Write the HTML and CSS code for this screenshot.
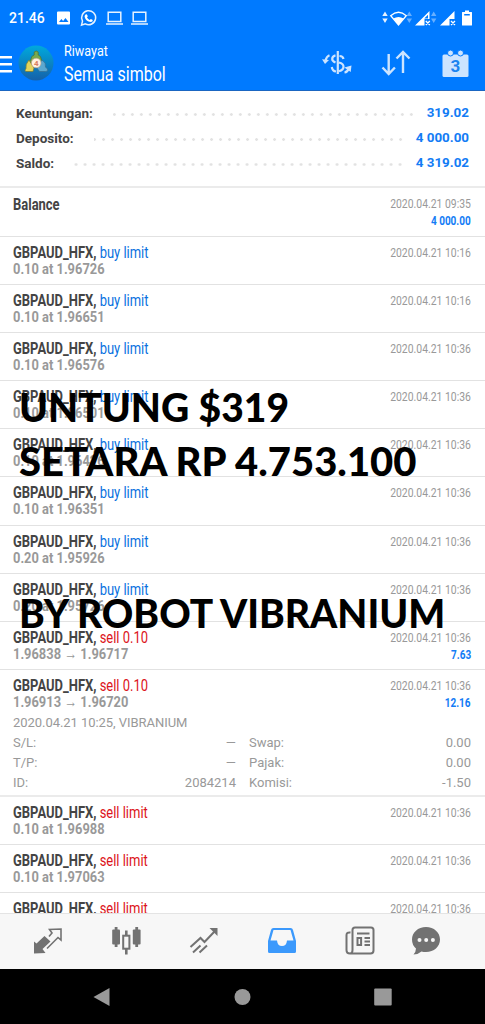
FILE: index.html
```
<!DOCTYPE html>
<html lang="id">
<head>
<meta charset="utf-8">
<title>Riwayat</title>
<link rel="stylesheet" href="styles.css">
</head>
<body>
<div class="screen">
  <header>
    <div class="status">
      <span class="clock">21.46</span>
      <svg class="status-left" width="96" height="18" viewBox="0 0 96 18" fill="none" stroke="#e6f2ff">
        <path fill="#fff" stroke="none" fill-rule="evenodd" d="M2 2.500h11q1 0 1 1v11q0 1-1 1h-11q-1 0-1-1v-11q0-1 1-1zM3 13h9.500l-3-4-2.400 2.900-1.700-2z"/>
        <path stroke-width="1.500" d="M25.500 16.200l1-4.100a7 7 0 1 1 2.800 2.800z"/>
        <path fill="#fff" stroke="none" d="M29.500 5.500l1.300-.3 1 2-.8 1.200q1 1.700 2.700 2.500l1.200-1 1.900 1q0 2-2 2.200-5-.6-6.200-5.400 0-1.500.9-2.200z"/>
        <path stroke-width="1.500" d="M52.200 3.200h12.600v9.300H52.200zM50 15h17M77.200 3.200h12.600v9.300H77.200zM75 15h17"/>
      </svg>
      <svg class="status-right" width="92" height="18" viewBox="0 0 92 18" fill="#fff">
        <path d="M.3 7L3 2.500 5.700 7zM.3 9.500h5.400L3 14z" opacity=".9"/>
        <path fill="none" stroke="#fff" stroke-width="1.400" d="M8.700 6.700Q16.500 0 24.300 6.700L16.500 16z"/><path d="M11.300 9.500q5.200-3 10.400 0L16.500 16z"/>
        <path d="M24.600 7l2.700-4.500L30 7zM24.600 9.500H30L27.300 14zM49 7l2.700-4.500L54.400 7zM49 9.500h5.400L51.700 14z" opacity=".4"/>
        <path fill-rule="evenodd" d="M33 16.500L47.500 2v8h-5v6.500zM42.500 9.500h3.500V5.700l-3.500 3.500zM58 16.500L72.500 2v8h-5v6.500z"/>
        <path fill="none" stroke="#fff" stroke-width="1.300" d="M43.800 12l4 4m0-4l-4 4M69 12l4 4m0-4l-4 4"/>
        <path fill-rule="evenodd" d="M80.500 3H83V1.500h4V3h2.500q.5 0 .5.500v12.500q0 .5-.5.500h-9q-.5 0-.5-.5V3.500q0-.5.500-.5zm1.700 2v1.500h5.600V5z"/>
      </svg>
    </div>
    <div class="toolbar">
      <svg class="burger" width="13" height="36" viewBox="0 0 13 36"><path stroke="#fff" stroke-width="2.600" d="M0 12.300h12M0 19.300h12M0 26.300h12"/></svg>
      <svg class="logo" width="36" height="36" viewBox="0 0 36 36">
        <defs><linearGradient id="disc" x1="0" y1="0" x2="0" y2="1"><stop offset="0" stop-color="#00a9dc"/><stop offset="1" stop-color="#1561a9"/></linearGradient></defs>
        <circle cx="18" cy="18" r="17.500" fill="url(#disc)"/>
        <path fill="#78a94c" stroke="#456f3b" stroke-width=".7" d="M13 14q0-3 3.200-4-1-4 2-4t2 4q3 1 3 4l2 4H11z"/>
        <path fill="#e3d45b" stroke="#75772e" stroke-width=".7" d="M11 15l5 8-1 3.500H8q-2-1 0-3-1-4 3-8.500z"/>
        <path fill="#5ca8d0" stroke="#356b91" stroke-width=".7" d="M24 15q4.500 3 3.500 7l2 2q1 2.500-2 2.500h-6l-3-4z"/>
        <circle cx="18.200" cy="18" r="4.800" fill="#fff1df" stroke="#c0a186" stroke-width=".6"/>
        <text x="18.200" y="21" text-anchor="middle" class="logo-digit">4</text>
      </svg>
      <div class="heading"><span class="c sub">Riwayat</span><span class="c main">Semua simbol</span></div>
      <svg class="actions" width="150" height="34" viewBox="0 0 150 34" fill="none" stroke="#cce4ff" stroke-width="2.200">
        <path d="M16.800 5v23M18.500 10q3.500.2 4 3M18 16.500q4.500 1 4.500 4.300t-4.500 4.400M14.500 9.300q-3.300.7-3.300 3.700 0 2.200 3.300 3.500M10.800 21q.5 4 4.200 4.500"/>
        <path d="M8.500 9.300Q5.500 10.500 4.500 14.500M23.500 26.500q3-.5 4.300-4"/><path fill="#cce4ff" stroke="none" d="M1 13.200l7 .8-4 4zM23.300 21.500l7.200-2-.8 6.500z"/>
        <path stroke-width="2.400" d="M67.700 8v19.500M61.500 21.500l6.200 6.500 6.200-6.500M82 27V6.500M75.500 12.500L82 6l6.500 6.500"/>
        <rect x="121.500" y="8.500" width="26" height="22.500" rx="1.500" fill="#cce4ff" stroke="none"/>
        <circle cx="129.500" cy="7" r="3" fill="#cce4ff" stroke="#007aff" stroke-width="1"/><circle cx="139.500" cy="7" r="3" fill="#cce4ff" stroke="#007aff" stroke-width="1"/>
        <text x="134.500" y="26" text-anchor="middle" class="cal-digit">3</text>
      </svg>
    </div>
  </header>

  <section class="summary">
    <div class="sum"><b>Keuntungan:</b><i class="dots"></i><strong>319.02</strong></div>
    <div class="sum"><b>Deposito:</b><i class="dots"></i><strong>4 000.00</strong></div>
    <div class="sum"><b>Saldo:</b><i class="dots"></i><strong>4 319.02</strong></div>
  </section>

  <main>
    <div class="row first"><div><div class="c name">Balance</div></div><div class="side"><span class="c date">2020.04.21 09:35</span><b class="c val">4 000.00</b></div></div>
    <div class="row"><div><div class="c name">GBPAUD_HFX, <span class="buy">buy limit</span></div><div class="c price">0.10 at 1.96726</div></div><div class="side"><span class="c date">2020.04.21 10:16</span></div></div>
    <div class="row"><div><div class="c name">GBPAUD_HFX, <span class="buy">buy limit</span></div><div class="c price">0.10 at 1.96651</div></div><div class="side"><span class="c date">2020.04.21 10:16</span></div></div>
    <div class="row"><div><div class="c name">GBPAUD_HFX, <span class="buy">buy limit</span></div><div class="c price">0.10 at 1.96576</div></div><div class="side"><span class="c date">2020.04.21 10:36</span></div></div>
    <div class="row"><div><div class="c name">GBPAUD_HFX, <span class="buy">buy limit</span></div><div class="c price">0.10 at 1.96501</div></div><div class="side"><span class="c date">2020.04.21 10:36</span></div></div>
    <div class="row"><div><div class="c name">GBPAUD_HFX, <span class="buy">buy limit</span></div><div class="c price">0.10 at 1.96426</div></div><div class="side"><span class="c date">2020.04.21 10:36</span></div></div>
    <div class="row"><div><div class="c name">GBPAUD_HFX, <span class="buy">buy limit</span></div><div class="c price">0.10 at 1.96351</div></div><div class="side"><span class="c date">2020.04.21 10:36</span></div></div>
    <div class="row"><div><div class="c name">GBPAUD_HFX, <span class="buy">buy limit</span></div><div class="c price">0.20 at 1.95926</div></div><div class="side"><span class="c date">2020.04.21 10:36</span></div></div>
    <div class="row"><div><div class="c name">GBPAUD_HFX, <span class="buy">buy limit</span></div><div class="c price">0.20 at 1.95726</div></div><div class="side"><span class="c date">2020.04.21 10:36</span></div></div>
    <div class="row"><div><div class="c name">GBPAUD_HFX, <span class="sell">sell 0.10</span></div><div class="c price">1.96838 → 1.96717</div></div><div class="side"><span class="c date">2020.04.21 10:36</span><b class="c val">7.63</b></div></div>
    <div class="row open"><div><div class="c name">GBPAUD_HFX, <span class="sell">sell 0.10</span></div><div class="c price">1.96913 → 1.96720</div></div><div class="side"><span class="c date">2020.04.21 10:36</span><b class="c val">12.16</b></div>
      <div class="detail">
        <span class="note">2020.04.21 10:25, VIBRANIUM</span>
        <span>S/L:</span><span class="num">—</span><span class="second">Swap:</span><span class="num">0.00</span>
        <span>T/P:</span><span class="num">—</span><span class="second">Pajak:</span><span class="num">0.00</span>
        <span>ID:</span><span class="num">2084214</span><span class="second">Komisi:</span><span class="num">-1.50</span>
      </div>
    </div>
    <div class="row"><div><div class="c name">GBPAUD_HFX, <span class="sell">sell limit</span></div><div class="c price">0.10 at 1.96988</div></div><div class="side"><span class="c date">2020.04.21 10:36</span></div></div>
    <div class="row"><div><div class="c name">GBPAUD_HFX, <span class="sell">sell limit</span></div><div class="c price">0.10 at 1.97063</div></div><div class="side"><span class="c date">2020.04.21 10:36</span></div></div>
    <div class="row"><div><div class="c name">GBPAUD_HFX, <span class="sell">sell limit</span></div></div><div class="side"><span class="c date">2020.04.21 10:36</span></div></div>
  </main>

  <nav class="tabs">
    <svg width="30" height="30" viewBox="0 0 30 30"><path fill="#727272" d="M1 15.500l2.500 2 8-7.500 6 5.500-8 7.500 3 4-11.500.5z"/><path fill="none" stroke="#727272" stroke-width="1.600" d="M16 10.500l3-3.500-2.500-3.500 11.500-.5v11l-3-2.500-11 11"/></svg>
    <svg width="30" height="30" viewBox="0 0 30 30" fill="#727272"><path d="M3.700 1h2.800v20H3.700zM24.300 1h2.800v20h-2.800zM14 4.500h2.600v5H14zM14 23h2.600v5.500H14z"/><rect x="1.200" y="3.500" width="7.800" height="15" rx="1"/><rect x="21.800" y="3.500" width="7.800" height="15" rx="1"/><rect x="12.200" y="9.700" width="6.200" height="13" fill="none" stroke="#727272" stroke-width="2"/></svg>
    <svg width="30" height="30" viewBox="0 0 30 30" fill="none" stroke="#727272" stroke-width="2"><path d="M1.500 21l10-9 4 4L26 5M4 26.500l7.500-7M10.500 26.500l7.500-7"/><path fill="#727272" stroke="none" d="M20.500 2h8v8z"/></svg>
    <svg width="30" height="30" viewBox="0 0 30 30"><path fill="#3b99fc" fill-rule="evenodd" d="M6.500 2h17q2 0 2.500 2l3 11v10.500q0 1.500-1.500 1.500h-25Q1 27 1 25.500V15L4 4q.5-2 2.500-2zM6.500 4L3.500 14.500H10q.5 5.500 5 5.500t5-5.500h6.500L23.500 4z"/></svg>
    <svg width="30" height="30" viewBox="0 0 30 30" fill="none" stroke="#727272" stroke-width="2"><path d="M5.500 6.500Q1.500 6 1.500 9v15q0 3.500 3.500 3.500h20.500q3 0 3-3V4q0-2.500-2.500-2.500H10Q7.500 1.500 7.500 4v20q0 3-2 3.500M12 7.500h12.500M19.500 12H25M19.500 15.500H25M19.500 19H25"/><rect x="12.500" y="12" width="3.600" height="7"/></svg>
    <svg width="30" height="30" viewBox="0 0 30 30"><path fill="#727272" d="M15 1c8 0 14 5.500 14 12.500S23 26 15 26q-2.500 0-4.500-.6-3 2.700-8 3.100 2.500-3 2.500-6-4-3.500-4-9C1 6.500 7 1 15 1z"/><g fill="#f7f7f7"><circle cx="8.500" cy="14" r="2"/><circle cx="15.200" cy="14" r="2"/><circle cx="21.900" cy="14" r="2"/></g></svg>
  </nav>
  <footer class="system">
    <svg width="20" height="20" viewBox="0 0 20 20"><path fill="#999" d="M1.500 10L17.500 1v18z"/></svg>
    <svg width="20" height="20" viewBox="0 0 20 20"><circle cx="9.500" cy="10" r="8" fill="#999"/></svg>
    <svg width="20" height="20" viewBox="0 0 20 20"><rect x="1.200" y="1.500" width="17.500" height="17" rx="1" fill="#999"/></svg>
  </footer>

  <div class="caption cap1">UNTUNG $319</div>
  <div class="caption cap2">SETARA RP 4.753.100</div>
  <div class="caption cap3">BY ROBOT VIBRANIUM</div>
</div>
</body>
</html>
```
FILE: styles.css
```
* { box-sizing: border-box; }
body { margin: 0; font-family: Roboto, sans-serif; background: #fff; }
.screen { position: relative; width: 485px; height: 1024px; overflow: hidden; display: flex; flex-direction: column; }
svg { display: block; flex: none; }

header { flex: none; height: 91px; background: #007aff; border-bottom: 1px solid #1a66c2; color: #fff; }
.status { display: flex; align-items: center; height: 36px; padding: 0 12px 0 9px; }
.clock { width: 47px; font-size: 14px; font-weight: 500; }
.status-right { margin-left: auto; margin-right: -1px; }
.toolbar { display: flex; align-items: center; height: 54px; }
.logo { margin-left: 5px; }
.logo-digit { font: bold 8px Roboto, sans-serif; fill: #d87e60; }
.heading { display: flex; flex-direction: column; margin-left: 10px; width: 120px; align-items: flex-start; padding-top: 1px; }
.actions { margin-left: auto; margin-right: 14px; }
.cal-digit { font: bold 17px Roboto, sans-serif; fill: #1b83ef; stroke: none; }

/* Condensed lettering */
.c { display: block; width: max-content; white-space: nowrap; transform: scaleX(.86); transform-origin: 0 50%; }
.c.sub { font-size: 15px; line-height: 21px; transform: scaleX(.84); }
.c.main { font-size: 20px; line-height: 25px; transform: scaleX(.8); }

.summary { flex: none; height: 97px; padding: 9px 16px 0; border-bottom: 2px solid #ebebeb; }
.sum { display: flex; align-items: center; height: 25px; font-size: 13.500px; color: #444; }
.sum b { font-weight: 700; }
.sum strong { color: #137cf5; font-weight: 700; font-size: 13.400px; }
.dots { flex: 1; height: 3px; margin: 3px 11px 0 20px; background: radial-gradient(circle, #e2e2e2 1px, transparent 1.700px) right center / 9px 3px repeat-x; }

main { flex: 1; min-height: 0; overflow: hidden; }
.row { display: grid; grid-template-columns: 1fr auto; align-content: start; height: 48.1px; padding: 7px 14px 0 13px; border-bottom: 1px solid #e2e2e2; }
.row.first { height: 49px; padding-top: 8px; }
.row.first .side { margin-top: -1px; }
.row.open { height: 127px; border-bottom: 2px solid #ebebeb; }
.c.name { font-size: 16px; line-height: 17px; font-weight: 700; color: #444; transform: scaleX(.81); }
.name span { font-weight: 400; }
.name .buy { color: #0a72e0; }
.name .sell { color: #dc1420; }
.c.price { font-size: 15.500px; line-height: 17px; font-weight: 700; color: #999; transform: scaleX(.83); }
.side { display: flex; flex-direction: column; align-items: flex-end; }
.side .c { transform-origin: 100% 50%; line-height: 17px; font-size: 13px; }
.side .date { color: #999; transform: scaleX(.8); }
.side .val { color: #137cf5; transform: scaleX(.77); }

.detail { grid-column: 1 / 3; display: grid; grid-template-columns: 60px 163px 70px 165px; line-height: 20px; font-size: 13px; color: #999; padding-top: 2px; }
.note { grid-column: 1 / 5; letter-spacing: -.05px; }
.num { text-align: right; }
.second { padding-left: 13px; }

.tabs { flex: none; height: 56px; display: flex; align-items: center; background: #f7f7f7; border-top: 1px solid #e4e4e4; padding: 0 0 2px 33px; gap: 48px; }
.tabs svg:last-child { margin-left: -12px; }
.system { flex: none; height: 55px; display: flex; align-items: center; justify-content: space-between; background: #000; padding: 0 92px; }

.caption { position: absolute; left: 19px; font: 900 40px/50px Lato, Carlito, sans-serif; color: #000; white-space: nowrap; transform-origin: 0 50%; }
.cap1 { top: 382px; transform: scaleX(.975); }
.cap2 { top: 436px; }
.cap3 { top: 588px; transform: scaleX(.972); }
```
